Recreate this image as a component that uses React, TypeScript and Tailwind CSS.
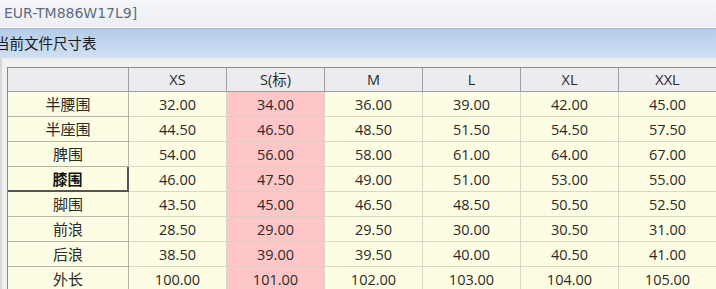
import React from "react";

const cols = ["XS", "S(标)", "M", "L", "XL", "XXL"];
const rows: [string, string[]][] = [
  ["半腰围", ["32.00", "34.00", "36.00", "39.00", "42.00", "45.00"]],
  ["半座围", ["44.50", "46.50", "48.50", "51.50", "54.50", "57.50"]],
  ["脾围", ["54.00", "56.00", "58.00", "61.00", "64.00", "67.00"]],
  ["膝围", ["46.00", "47.50", "49.00", "51.00", "53.00", "55.00"]],
  ["脚围", ["43.50", "45.00", "46.50", "48.50", "50.50", "52.50"]],
  ["前浪", ["28.50", "29.00", "29.50", "30.00", "30.50", "31.00"]],
  ["后浪", ["38.50", "39.00", "39.50", "40.00", "40.50", "41.00"]],
  ["外长", ["100.00", "101.00", "102.00", "103.00", "104.00", "105.00"]],
];

export default function App() {
  return (
    <div
      className="w-[716px] h-[289px] overflow-hidden bg-[#f0f0f0] flex flex-col"
      style={{ fontFamily: '"Open Sans", "Noto Sans CJK SC", sans-serif' }}
    >
      <div
        className="h-[28px] shrink-0 bg-gradient-to-b from-[#f6f7f9] to-[#eceef2] border-b border-[#ffffff] flex items-center pl-[4px] text-[14px] text-[#5d6b80]"
        style={{ fontFamily: '"DejaVu Sans", sans-serif' }}
      >
        EUR-TM886W17L9]
      </div>
      <div className="h-[30px] shrink-0 bg-gradient-to-b from-[#b5cce8] to-[#d0e0f2] border-t border-[#9cb7db] flex items-center text-[14.5px] text-[#1a1a1a] overflow-hidden">
        <span className="-ml-[5px]">当前文件尺寸表</span>
      </div>
      <div className="flex-1 border-l-2 border-[#d8d8d8] pl-[5px] pt-[9px]">
        <div className="border-l border-t border-[#8a8a8a] w-max">
          <div className="grid grid-cols-[121px_98px_98px_98px_98px_98px_98px] text-[#2a2a2a]">
            <div className="h-[24px] bg-[#ececf0] border-r border-b border-[#a0a0a0]" />
            {cols.map((c) => (
              <div
                key={c}
                className="h-[24px] pt-[1px] bg-[#ececf0] border-r border-b border-[#a0a0a0] flex items-center justify-center text-[14.5px]"
              >
                {c}
              </div>
            ))}
            {rows.map(([label, vals]) => (
              <React.Fragment key={label}>
                {label === "膝围" ? (
                  <div className="h-[25px] pt-[1px] bg-[#fdfde4] border-r-2 border-b-2 border-[#555] flex items-center justify-center text-[15px] font-bold text-[#111]">
                    {label}
                  </div>
                ) : (
                  <div className="h-[25px] pt-[1px] bg-[#fdfde4] border-r border-b border-[#b5b5a8] flex items-center justify-center text-[15px]">
                    {label}
                  </div>
                )}
                {vals.map((v, i) => (
                  <div
                    key={i}
                    className={
                      i === 1
                        ? "h-[25px] pt-[1px] bg-[#fec6c6] border-r border-b border-[#d8d0c4] flex items-center justify-center text-[14.5px]"
                        : "h-[25px] pt-[1px] bg-[#fdfde4] border-r border-b border-[#d8d8c8] flex items-center justify-center text-[14.5px]"
                    }
                  >
                    {v}
                  </div>
                ))}
              </React.Fragment>
            ))}
          </div>
        </div>
      </div>
    </div>
  );
}
